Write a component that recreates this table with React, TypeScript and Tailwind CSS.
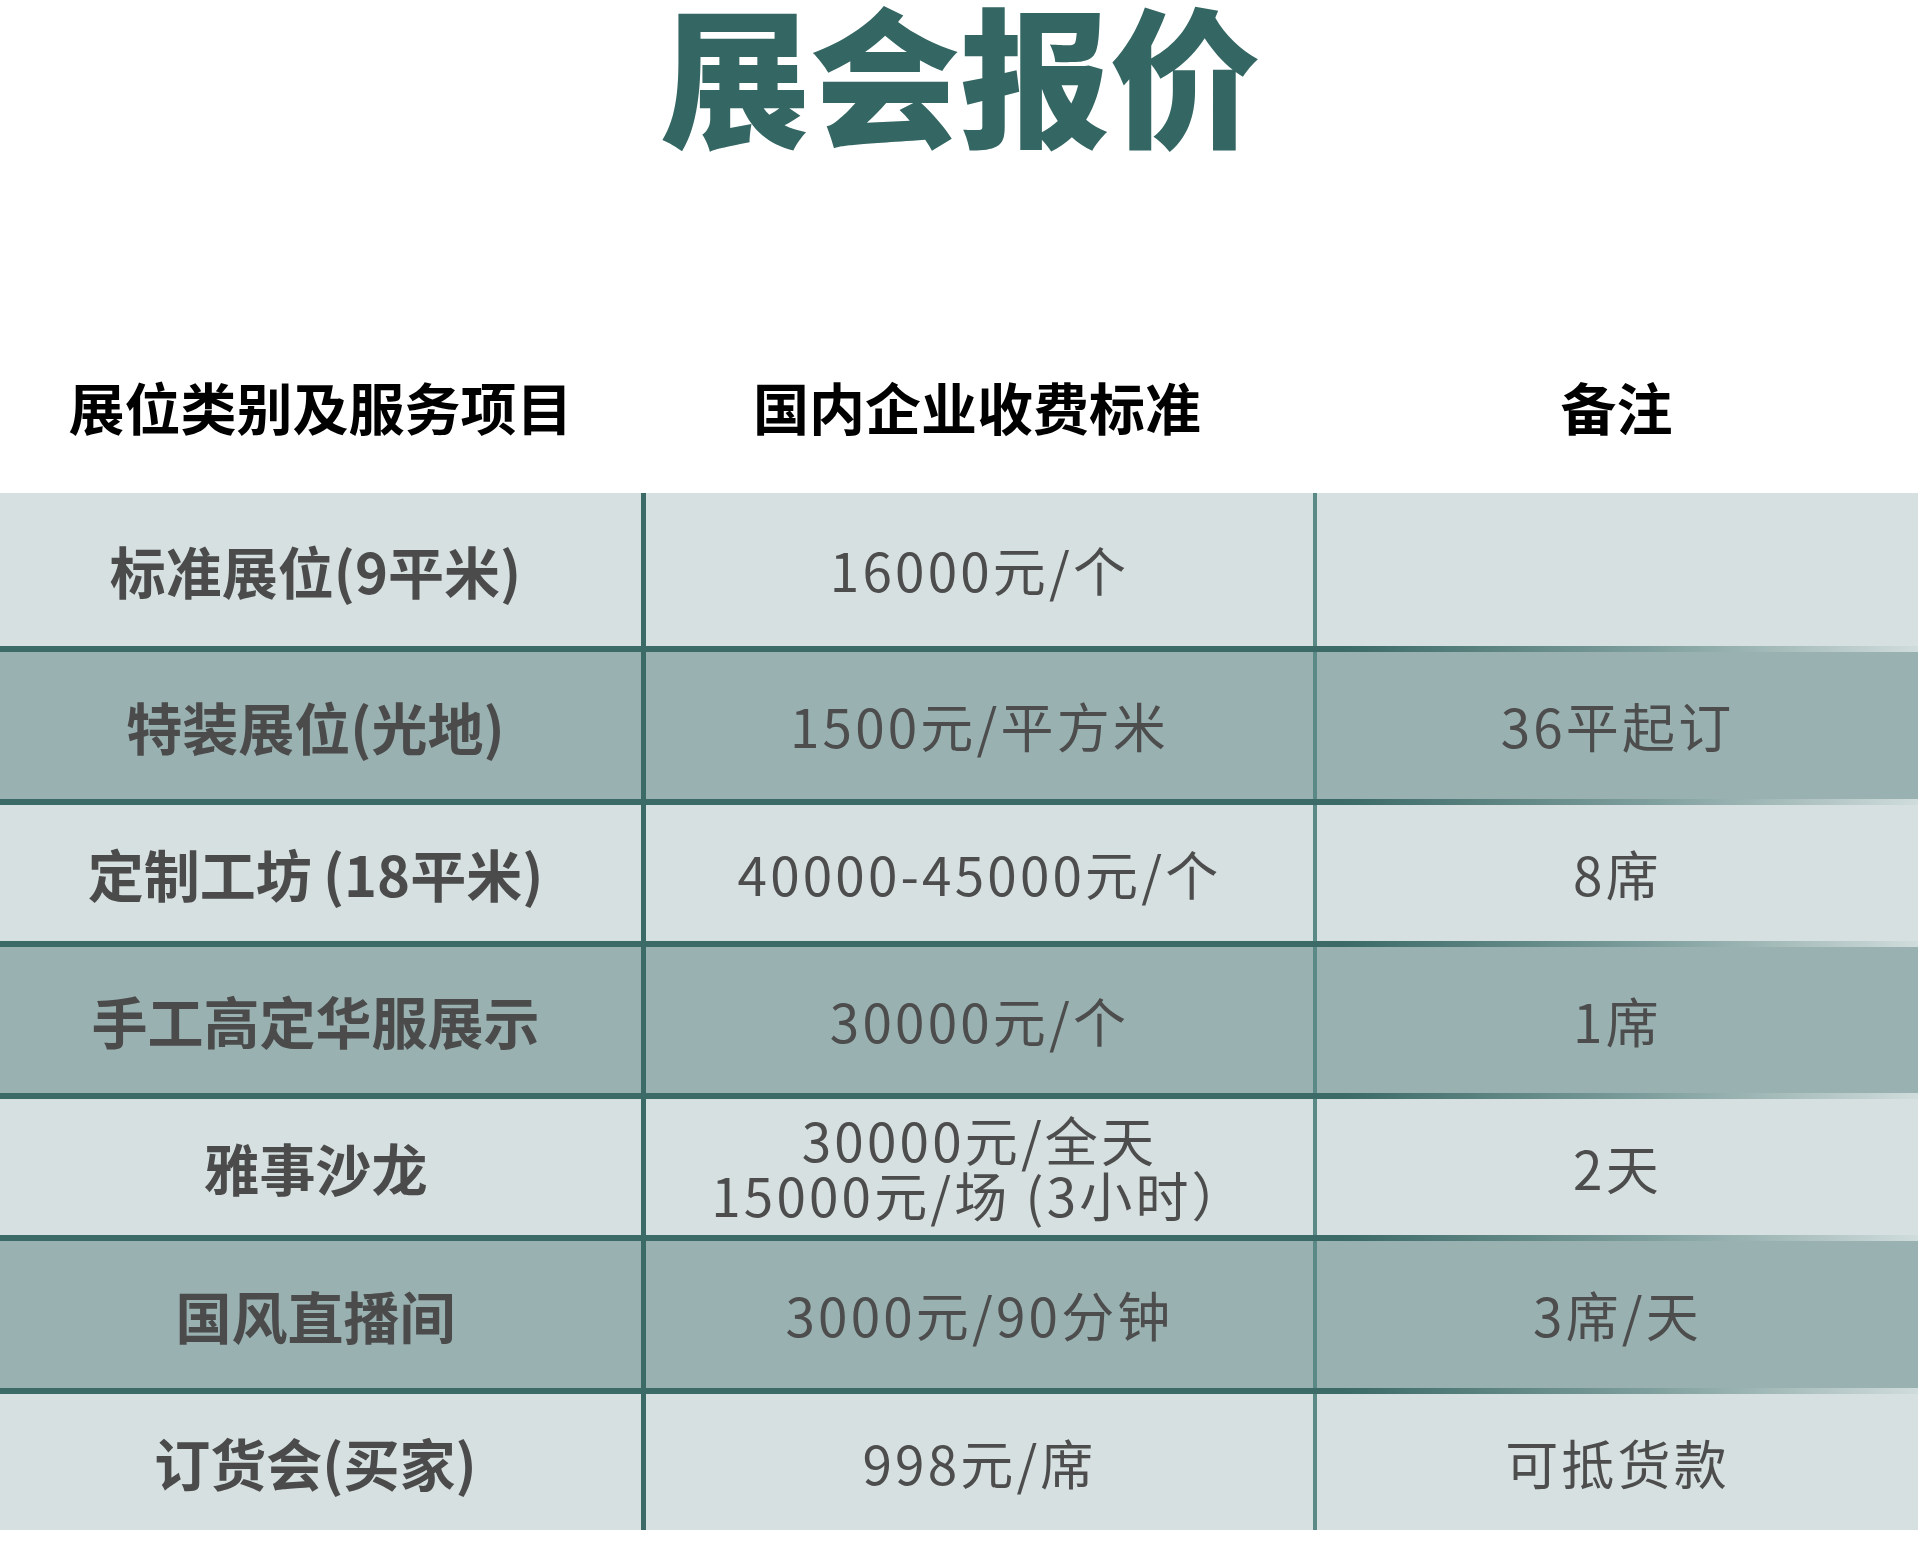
const rows = [
  { name: '标准展位(9平米)', price: ['16000元/个'], note: '', h: 'h-[153px]', dark: false },
  { name: '特装展位(光地)', price: ['1500元/平方米'], note: '36平起订', h: 'h-[147px]', dark: true },
  { name: '定制工坊\u2009(18平米)', price: ['40000-45000元/个'], note: '8席', h: 'h-[136px]', dark: false },
  { name: '手工高定华服展示', price: ['30000元/个'], note: '1席', h: 'h-[146px]', dark: true },
  { name: '雅事沙龙', price: ['30000元/全天', '15000元/场 (3小时）'], note: '2天', h: 'h-[136px]', dark: false },
  { name: '国风直播间', price: ['3000元/90分钟'], note: '3席/天', h: 'h-[147px]', dark: true },
  { name: '订货会(买家)', price: ['998元/席'], note: '可抵货款', h: 'h-[136px]', dark: false },
];

const font = { fontFamily: '"Noto Sans CJK SC", "Noto Sans", sans-serif' };

function Separator() {
  return (
    <div className="grid h-[6px] grid-cols-[641px_672px_1fr]">
      <div className="bg-[#3b6a67]" />
      <div className="bg-[#3b6a67]" />
      <div className="bg-gradient-to-r from-[#3b6a67] from-5% via-[#7d9e9c] via-55% to-[#d0dcdc]" />
    </div>
  );
}

export default function App() {
  return (
    <div className="w-[1920px] h-[1541px] bg-white overflow-hidden" style={font}>
      {/* Title */}
      <div className="h-[150px] flex justify-center">
        <h1 className="-mt-[4px] text-[150px] leading-none font-black text-[#346763]">展会报价</h1>
      </div>

      {/* Header */}
      <div className="h-[343px] pt-[228px] grid grid-cols-[641px_672px_1fr] text-[56px] leading-[56px] font-bold text-black">
        <div className="text-center">展位类别及服务项目</div>
        <div className="text-center">国内企业收费标准</div>
        <div className="text-center">备注</div>
      </div>

      {/* Table */}
      <div className="w-[1918px]">
        {rows.map((r, i) => (
          <div key={i}>
            {i > 0 && <Separator />}
            <div
              className={`grid grid-cols-[641px_672px_1fr] ${r.h} ${r.dark ? 'bg-[#99b1b1]' : 'bg-[#d6e0e0]'}`}
            >
              <div className="flex items-center justify-center pr-[10px] text-[56px] leading-none font-bold text-[#4b4b4b]">
                {r.name}
              </div>
              <div className="flex flex-col items-center justify-center border-l-[5px] border-[#3b6a67] text-[53px] leading-[55px] tracking-[0.06em] text-[#4d4d4d]">
                {r.price.map((p, j) => (
                  <div key={j}>{p}</div>
                ))}
              </div>
              <div className="flex items-center justify-center border-l-[4px] border-[#5b8986] text-[53px] leading-none tracking-[0.06em] text-[#4d4d4d]">
                {r.note}
              </div>
            </div>
          </div>
        ))}
      </div>
    </div>
  );
}
